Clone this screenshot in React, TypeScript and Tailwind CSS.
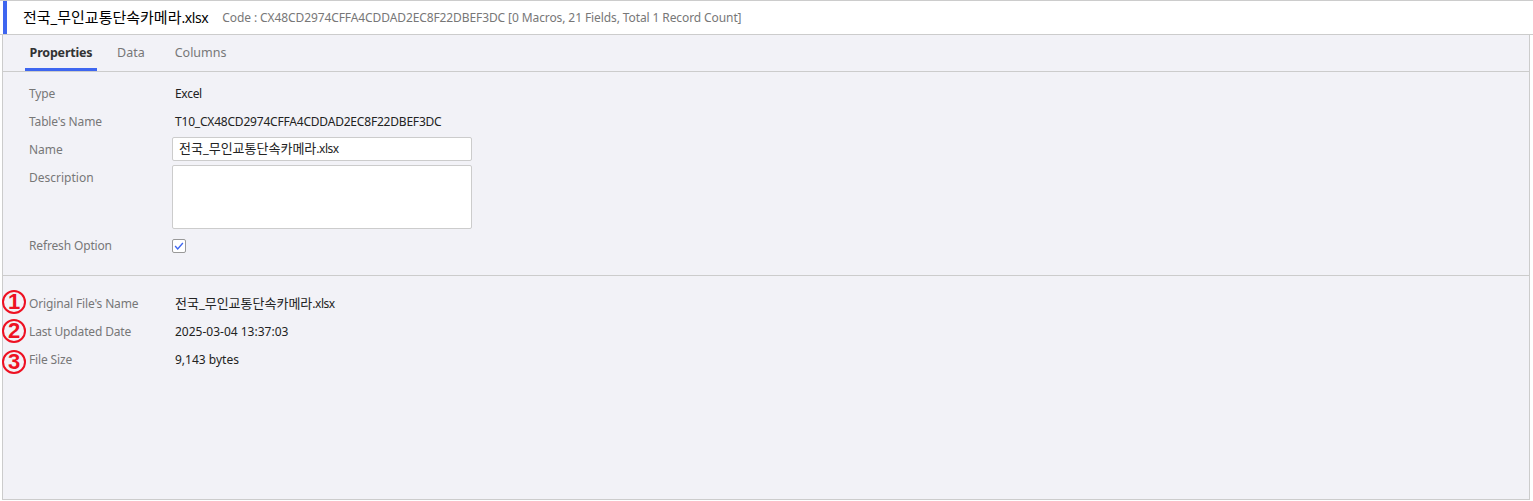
const FONT = "font-['Noto_Sans','Noto_Sans_CJK_KR',sans-serif]";

function FileName({ ko = "text-[13px]", ext = "text-xs tracking-[-0.5px]" }: { ko?: string; ext?: string }) {
  return (
    <>
      <span className={ko}>전국_무인교통단속카메라</span>
      <span className={ext}>.xlsx</span>
    </>
  );
}

function Row({ label, children, badge, valueClass = "" }: { label: string; children?: React.ReactNode; badge?: React.ReactNode; valueClass?: string }) {
  return (
    <div className="relative flex h-7 items-center text-xs text-[#222]">
      {badge}
      <div className="w-[172px] pl-[26px] tracking-[-0.15px] text-[#777]">{label}</div>
      <div className={valueClass}>{children}</div>
    </div>
  );
}

function Badge({ n, top }: { n: string; top: string }) {
  return (
    <div className={`absolute left-[-1px] ${top} flex h-6 w-6 items-center justify-center rounded-full border-[2.5px] border-[#ee1122] font-['Liberation_Sans'] text-[22px] font-bold text-[#ee1122]`}>
      {n}
    </div>
  );
}

export default function App() {
  return (
    <div className={`flex h-[501px] w-[1533px] flex-col overflow-hidden bg-white ${FONT}`}>
      <header className="flex h-[35px] shrink-0 items-center border-y border-[#ccc] pl-[3px]">
        <div className="h-full w-1 bg-[#3e66f0]" />
        <span className="ml-[16px] text-sm text-black">
          <FileName ko="text-[15px]" ext="text-sm tracking-[-0.4px]" />
        </span>
        <span className="ml-[14px] text-xs tracking-[-0.1px] text-[#777]">Code : CX48CD2974CFFA4CDDAD2EC8F22DBEF3DC [0 Macros, 21 Fields, Total 1 Record Count]</span>
      </header>
      <main className="ml-[2px] mr-[3px] mb-px flex-1 border-x border-b border-[#ccc] bg-[#f2f2f7]">
        <nav className="flex h-[37px] items-stretch gap-[20px] border-b border-[#ccc] pl-[22px] text-[12.5px]">
          <div className="flex w-[72px] items-center justify-center border-b-[3px] border-[#3e66f0] pt-[3px] font-bold tracking-[-0.2px] text-[#333]">Properties</div>
          <div className="flex items-center text-[#777]">Data</div>
          <div className="ml-[10px] flex items-center text-[#777]">Columns</div>
        </nav>
        <section className="flex h-[204px] flex-col border-b border-[#ccc] pt-2">
          <Row label="Type" valueClass="tracking-[-0.3px]">Excel</Row>
          <Row label="Table's Name" valueClass="tracking-[-0.2px]">T10_CX48CD2974CFFA4CDDAD2EC8F22DBEF3DC</Row>
          <div className="flex h-7 items-start text-xs">
            <div className="w-[169px] pl-[26px] pt-[6px] text-[#777]">Name</div>
            <div className="mt-px flex h-6 w-[300px] items-center rounded-[2px] border border-[#ccc] bg-white pl-[6px] text-[#222]">
              <span><FileName /></span>
            </div>
          </div>
          <div className="flex h-[68px] items-start text-xs">
            <div className="w-[169px] pl-[26px] pt-[6px] text-[#777]">Description</div>
            <div className="mt-px h-16 w-[300px] rounded-[2px] border border-[#ccc] bg-white" />
          </div>
          <div className="flex h-7 items-center text-xs">
            <div className="w-[169px] pl-[26px] tracking-[-0.15px] text-[#777]">Refresh Option</div>
            <div className="flex h-[14px] w-[14px] items-center justify-center rounded-[2px] border border-[#999] bg-white">
              <svg viewBox="0 0 14 14" className="h-3 w-3" fill="none" stroke="#3e66f0" strokeWidth="1.6">
                <path d="M2.5 7 L5.5 10.5 L11.5 3.5" />
              </svg>
            </div>
          </div>
        </section>
        <section className="relative flex flex-col pt-[14px]">
          <Row label="Original File's Name" badge={<Badge n="1" top="top-0" />}><FileName /></Row>
          <Row label="Last Updated Date" badge={<Badge n="2" top="top-px" />}>2025-03-04 13:37:03</Row>
          <Row label="File Size" badge={<Badge n="3" top="top-[4px]" />}>9,143 bytes</Row>
        </section>
      </main>
    </div>
  );
}
